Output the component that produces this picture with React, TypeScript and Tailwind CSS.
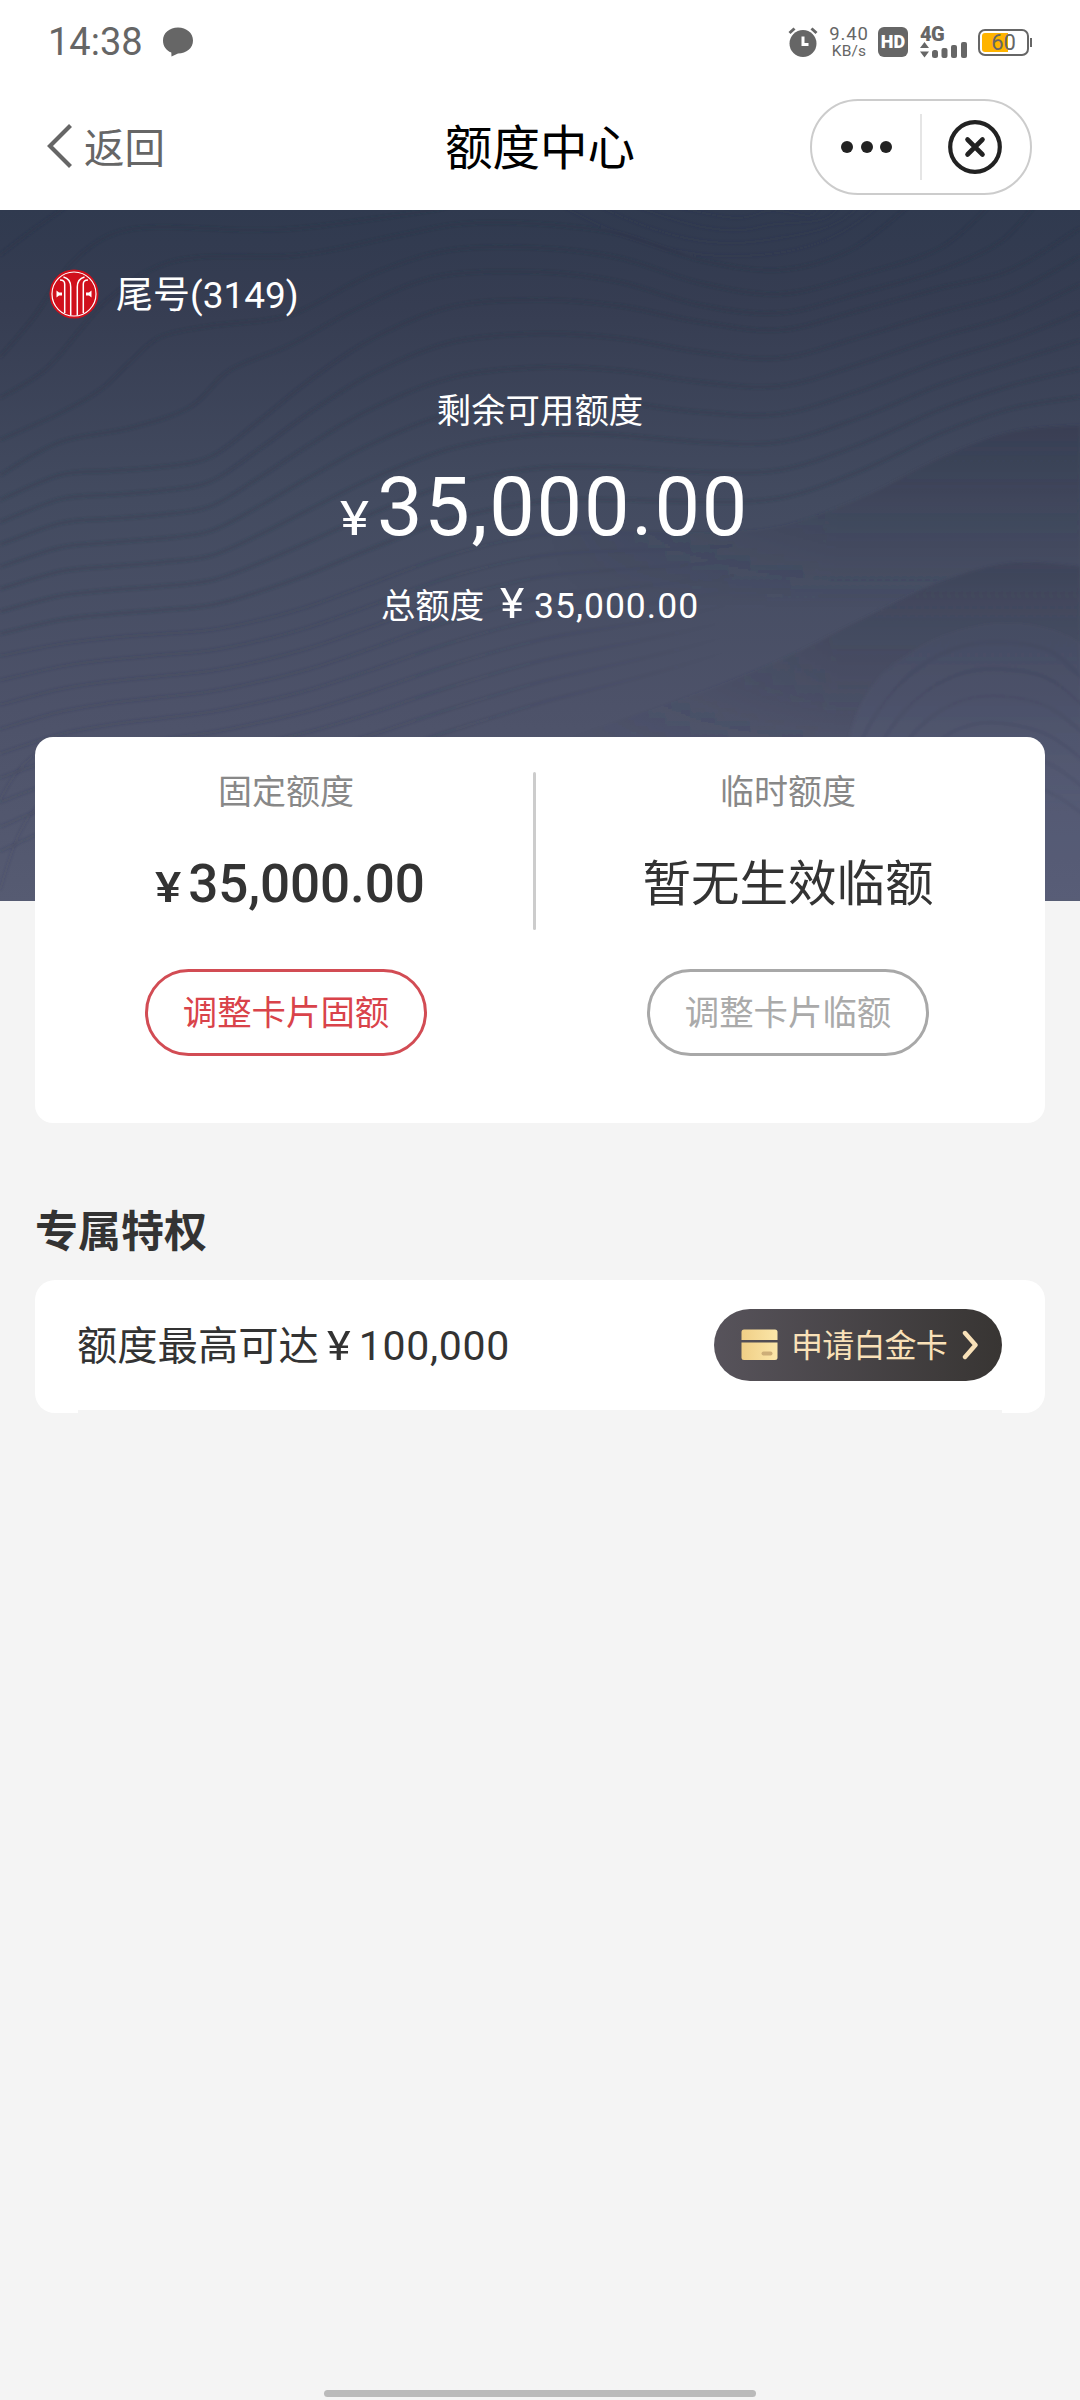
import React from "react";

type Pt = [number, number];

/** Smooth path through a list of points. */
function curve(p: Pt[]): string {
  let d = `M${p[0][0]} ${p[0][1]}`;
  for (let i = 0; i < p.length - 1; i++) {
    const a = p[Math.max(i - 1, 0)];
    const b = p[i];
    const c = p[i + 1];
    const e = p[Math.min(i + 2, p.length - 1)];
    d += ` C${(b[0] + (c[0] - a[0]) / 6).toFixed(1)} ${(b[1] + (c[1] - a[1]) / 6).toFixed(1)} ${(c[0] - (e[0] - b[0]) / 6).toFixed(1)} ${(c[1] - (e[1] - b[1]) / 6).toFixed(1)} ${c[0]} ${c[1]}`;
  }
  return d;
}

const XS = [0, 60, 110, 160, 210, 260, 310, 370, 450, 540, 620, 700, 780, 860, 940, 1010, 1080];
const UPPER = [290, 265, 261, 257, 247, 210, 170, 130, 97, 90, 96, 112, 120, 100, 78, 60, 18];
const RIDGE = [446, 434, 428, 424, 420, 410, 396, 374, 345, 325, 322, 322, 316, 288, 248, 222, 215];
const LOWER = [690, 660, 645, 635, 625, 615, 605, 590, 565, 535, 510, 482, 450, 410, 372, 353, 356];

const mix = (a: number[], b: number[], t: number): Pt[] =>
  XS.map((x, i) => [x, a[i] + (b[i] - a[i]) * t] as Pt);

const TOP_LINES: Pt[][] = [
  [[0, 45], [30, 22], [70, -6]],
  [[0, 147], [34, 107], [70, 55], [110, 25], [160, 17], [250, 20], [310, 17], [420, 2], [460, -6]],
  [[0, 188], [45, 160], [80, 120], [105, 92], [150, 60], [200, 47], [300, 45], [400, 25], [460, 14], [540, 14], [620, 24], [700, 50], [780, 60], [850, 40], [910, -5]],
  [[0, 230], [60, 203], [100, 180], [130, 152], [160, 127], [210, 116], [290, 105], [370, 65], [450, 40], [540, 38], [620, 48], [700, 73], [780, 84], [860, 65], [940, 38], [990, -5]],
  [[0, 265], [60, 232], [130, 218], [190, 197], [230, 160], [290, 135], [360, 97], [440, 66], [540, 62], [620, 72], [700, 95], [780, 103], [860, 83], [940, 60], [1000, 32], [1035, -5]],
];

function HeroBackdrop() {
  return (
    <svg className="absolute inset-0 h-full w-full" viewBox="0 0 1080 691" fill="none" aria-hidden="true">
      <defs>
        <linearGradient id="heroBase" x1="0" y1="0" x2="0" y2="1">
          <stop offset="0" stopColor="#303a4f" />
          <stop offset="0.14" stopColor="#363d52" />
          <stop offset="0.42" stopColor="#434b60" />
          <stop offset="0.72" stopColor="#4d5269" />
          <stop offset="1" stopColor="#565b72" />
        </linearGradient>
        <linearGradient id="ridgeShade" x1="0" y1="215" x2="0" y2="400" gradientUnits="userSpaceOnUse">
          <stop offset="0" stopColor="#2f3549" stopOpacity="0.38" />
          <stop offset="1" stopColor="#2f3549" stopOpacity="0" />
        </linearGradient>
        <linearGradient id="lowerShade" x1="0" y1="350" x2="0" y2="560" gradientUnits="userSpaceOnUse">
          <stop offset="0" stopColor="#33394d" stopOpacity="0.36" />
          <stop offset="0.6" stopColor="#33394d" stopOpacity="0.18" />
          <stop offset="1" stopColor="#33394d" stopOpacity="0" />
        </linearGradient>
        <linearGradient id="fadeIn" x1="540" y1="0" x2="840" y2="0" gradientUnits="userSpaceOnUse">
          <stop offset="0" stopColor="#fff" stopOpacity="0" />
          <stop offset="1" stopColor="#fff" />
        </linearGradient>
        <linearGradient id="fadeOut" x1="380" y1="0" x2="740" y2="0" gradientUnits="userSpaceOnUse">
          <stop offset="0" stopColor="#fff" />
          <stop offset="1" stopColor="#fff" stopOpacity="0" />
        </linearGradient>
        <mask id="rightSide" maskUnits="userSpaceOnUse" x="0" y="0" width="1080" height="691">
          <rect width="1080" height="691" fill="url(#fadeIn)" />
        </mask>
        <mask id="leftSide" maskUnits="userSpaceOnUse" x="0" y="0" width="1080" height="691">
          <rect width="1080" height="691" fill="url(#fadeOut)" />
        </mask>
        <linearGradient id="humpLight" x1="0" y1="410" x2="0" y2="600" gradientUnits="userSpaceOnUse">
          <stop offset="0" stopColor="#5a6180" stopOpacity="0.08" />
          <stop offset="1" stopColor="#5a6180" stopOpacity="0.3" />
        </linearGradient>
        <filter id="soft" x="-5%" y="-5%" width="110%" height="110%">
          <feGaussianBlur stdDeviation="1.6" />
        </filter>
      </defs>
      <rect width="1080" height="691" fill="url(#heroBase)" />
      <g filter="url(#soft)">
        <g mask="url(#rightSide)">
          <path d={`${curve(mix(RIDGE, RIDGE, 0).slice(9))} V560 H540Z`} fill="url(#ridgeShade)" />
          <path d={`${curve(mix(LOWER, LOWER, 0).slice(9))} V691 H540Z`} fill="url(#lowerShade)" />
        </g>
        <path d="M842 691 C830 560 850 480 900 450 C960 405 1040 400 1090 440 V691Z" fill="url(#humpLight)" />
        <g stroke="#262b40" strokeOpacity="0.25" strokeWidth="3">
          {TOP_LINES.map((l, i) => (
            <path key={i} d={curve(l)} />
          ))}
          {[0, 1, 2, 3, 4, 5, 6].map((i) => (
            <path key={i} d={curve(mix(UPPER, RIDGE, i / 7))} />
          ))}
        </g>
        <g stroke="#262b40" strokeOpacity="0.14" strokeWidth="3" mask="url(#leftSide)">
          {[0, 1, 2, 3, 4, 5, 6, 7, 8].map((i) => (
            <path key={i} d={curve(mix(RIDGE, LOWER, i / 10))} />
          ))}
        </g>
        <g stroke="#262b40" strokeOpacity="0.1" strokeWidth="3">
          {[0, 1, 2, 3, 4, 5].map((i) => (
            <path key={i} d={`M${850 + i * 12} ${560 + i * 20} C${880 + i * 8} ${470 + i * 25} ${940 + i * 4} ${430 + i * 26} 1000 ${432 + i * 27} S1060 ${450 + i * 27} 1090 ${475 + i * 27}`} />
          ))}
          {[0, 1, 2, 3].map((i) => (
            <path key={i} d={`M${560 + i * 36} -5 C${640 + i * 24} ${40 - i * 12} ${700 + i * 12} ${50 - i * 12} ${760} ${45 - i * 14} S${850 - i * 12} 20 ${880 - i * 20} -5`} />
          ))}
          <path d="M0 590 C15 560 28 545 60 530" />
          <path d="M0 680 C12 640 20 610 44 590" />
        </g>
      </g>
    </svg>
  );
}

function BankLogo() {
  return (
    <svg className="h-[50px] w-[50px]" viewBox="0 0 50 50" fill="none" aria-hidden="true">
      <circle cx="25" cy="25" r="24.5" fill="#d0101c" />
      <circle cx="25" cy="25" r="22" stroke="#fff" strokeWidth="1.2" />
      <g stroke="#fff" strokeWidth="1.5">
        <path d="M15.700 44V15C15.700 12 13.500 11 11 11" />
        <path d="M21.700 46.500V18C21.700 12.500 18.500 9 14.500 8" />
        <path d="M34.300 44V15C34.300 12 36.500 11 39 11" />
        <path d="M28.300 46.500V18C28.300 12.500 31.500 9 35.500 8" />
      </g>
      <path d="M7.500 21.500L10 23.500H13V26.500H10L7.500 28.500Z M42.500 21.500L40 23.500H37V26.500H40L42.500 28.500Z" fill="#fff" />
    </svg>
  );
}

function StatusBar() {
  return (
    <div className="flex h-[84px] items-center justify-between pl-[48px] pr-[48px] text-[#666]">
      <div className="flex items-center">
        <span className="font-[Roboto] text-[38px] leading-[44px]">14:38</span>
        <svg className="ml-[20px] h-[30px] w-[30px]" viewBox="0 0 30 30" fill="#666">
          <path d="M15 0.500C23.500 0.500 30 6 30 13.500C30 21 23.500 26.500 15 26.500L8.500 29.500L8.300 25.500C3 23.500 0 19 0 13.500C0 6 6.500 0.500 15 0.500Z" />
        </svg>
      </div>
      <div className="flex items-center">
        <svg className="h-[30px] w-[30px]" viewBox="0 0 30 30" fill="none">
          <circle cx="15" cy="16.500" r="13.500" fill="#666" />
          <path d="M1.500 6L6.500 1.500M28.500 6L23.500 1.500" stroke="#666" strokeWidth="3" />
          <path d="M15 9.500V17.500H20.500" stroke="#fff" strokeWidth="3" />
        </svg>
        <div className="ml-[10px] flex w-[42px] flex-col items-center font-[Roboto]">
          <span className="text-[18.500px] leading-[19px] tracking-[0.8px]">9.40</span>
          <span className="text-[15.500px] leading-[15px] tracking-[0.2px]">KB/s</span>
        </div>
        <div className="ml-[8px] flex h-[30px] w-[30px] items-center justify-center rounded-[6px] bg-[#666] font-[Roboto] text-[18px] font-black leading-none text-white">
          HD
        </div>
        <div className="ml-[12px] flex h-[31px] w-[47px] flex-col justify-between">
          <span className="h-[15px] font-[Roboto] text-[20px] font-black leading-[14px] tracking-[-0.600px]">4G</span>
          <svg className="-mt-[3px] h-[17px] w-[47px]" viewBox="0 0 47 17" fill="#666">
            <path d="M0 7L4.500 1L9 7ZM0 10.500H9L4.500 16.500Z" />
            <rect x="12" y="9" width="6" height="8" rx="2.500" />
            <rect x="21.500" y="7" width="6" height="10" rx="2" />
            <rect x="31" y="4" width="6" height="13" rx="2" />
            <rect x="41" y="1" width="6" height="16" rx="2" />
          </svg>
        </div>
        <div className="ml-[11px] flex items-center">
          <div className="flex h-[27px] w-[51px] rounded-[7px] border-[2px] border-[#666] bg-[linear-gradient(to_right,#ffb400_28px,#fff_28px)] bg-clip-content p-[2px]">
            <span className="w-full text-center font-[Roboto] text-[22px] leading-[20px]">60</span>
          </div>
          <div className="ml-[1px] h-[9px] w-[2px] bg-[#666]" />
        </div>
      </div>
    </div>
  );
}

function NavBar() {
  return (
    <div className="grid h-[126px] grid-cols-3 px-[47px] font-['Noto_Sans_CJK_SC',sans-serif]">
      <div className="flex h-[126px] items-center pb-[2px] text-[#666]">
        <svg className="h-[44px] w-[25px]" viewBox="0 0 25 44" fill="none">
          <path d="M23.500 1.500L3 22L23.500 42.500" stroke="#666" strokeWidth="4.200" />
        </svg>
        <span className="ml-[12px] text-[40.500px] leading-[60px]">返回</span>
      </div>
      <h1 className="self-center pb-[5px] text-center text-[47.500px] leading-[70px] text-black">额度中心</h1>
      <div className="mb-[1px] mr-px flex h-[96px] w-[222px] items-center self-center justify-self-end rounded-full border-2 border-[#ccc]">
        <svg className="ml-[28px] h-[14px] w-[52px]" viewBox="0 0 52 14" fill="#222">
          <circle cx="7" cy="7" r="6" />
          <circle cx="27" cy="7" r="6" />
          <circle cx="46" cy="7" r="6" />
        </svg>
        <div className="ml-[28px] h-[66px] w-[2px] bg-[#e5e5e5]" />
        <svg className="ml-[26px] h-[54px] w-[54px]" viewBox="0 0 54 54" fill="none" stroke="#222">
          <circle cx="27" cy="27" r="24.800" strokeWidth="4.200" />
          <path d="M19.500 19.500L34.500 34.500M34.500 19.500L19.500 34.500" strokeWidth="4.600" strokeLinecap="round" />
        </svg>
      </div>
    </div>
  );
}

function Hero() {
  return (
    <section className="relative h-[691px] overflow-hidden text-white">
      <HeroBackdrop />
      <div className="relative flex flex-col font-['Noto_Sans_CJK_SC',sans-serif]">
        <div className="mt-[59px] flex h-[50px] items-center pl-[49px]">
          <BankLogo />
          <div className="ml-[17px] flex items-baseline whitespace-nowrap">
            <span className="text-[37px] leading-[50px]">尾号</span>
            <span className="font-[Roboto] text-[37px] leading-[50px]">(3149)</span>
          </div>
        </div>
        <div className="mt-[64px] h-[50px] text-center text-[34.4px] leading-[50px]">剩余可用额度</div>
        <div className="mt-[28px] flex h-[93px] items-baseline justify-center pl-[9px] font-[Roboto] leading-[94px]">
          <span className="w-[37px] origin-left scale-x-115 text-[48px]">¥</span>
          <span className="text-[81px] tracking-[1.800px]">35,000.00</span>
        </div>
        <div className="mt-[24px] flex h-[50px] items-baseline justify-center leading-[50px]">
          <span className="text-[34.4px]">总额度</span>
          <span className="ml-[16px] w-[34px] origin-left scale-x-110 font-[Roboto] text-[42px]">¥</span>
          <span className="font-[Roboto] text-[35.500px] tracking-[1px]">35,000.00</span>
        </div>
      </div>
    </section>
  );
}

function LimitCard() {
  return (
    <section className="relative mx-[35px] -mt-[164px] flex h-[386px] rounded-[18px] bg-white font-['Noto_Sans_CJK_SC',sans-serif]">
      <div className="flex w-[498px] flex-col items-center pl-[4px]">
        <div className="mt-[28px] h-[50px] text-[34px] leading-[50px] text-[#888]">固定额度</div>
        <div className="mt-[34px] flex h-[68px] items-baseline whitespace-nowrap pl-[8px] font-[Roboto] font-medium leading-[70px] text-[#333]">
          <span className="w-[33px] origin-left scale-x-115 text-[43px]">¥</span>
          <span className="text-[53px] tracking-[-0.100px]">35,000.00</span>
        </div>
        <button className="mt-[52px] flex h-[87px] w-[282px] justify-center rounded-full border-[3px] border-[#d24c54] text-[34.4px] leading-[76px] text-[#d9434a]">
          调整卡片固额
        </button>
      </div>
      <div className="mt-[35px] h-[158px] w-[3px] rounded-full bg-[#ccc]" />
      <div className="flex flex-1 flex-col items-center pr-[5px]">
        <div className="mt-[28px] h-[50px] text-[34px] leading-[50px] text-[#888]">临时额度</div>
        <div className="mt-[30px] h-[72px] text-[48.500px] leading-[70px] text-[#333]">暂无生效临额</div>
        <button className="mt-[52px] flex h-[87px] w-[282px] justify-center rounded-full border-[3px] border-[#a8a8a8] text-[34.4px] leading-[76px] text-[#aaa]">
          调整卡片临额
        </button>
      </div>
    </section>
  );
}

function Privileges() {
  return (
    <section className="mx-[35px] mt-[73px] font-['Noto_Sans_CJK_SC',sans-serif]">
      <h2 className="h-[64px] text-[43px] font-bold leading-[64px] text-[#333]">专属特权</h2>
      <div className="mt-[20px] flex h-[133px] flex-col rounded-[20px] bg-white">
        <div className="flex h-[130px] items-center justify-between pl-[42px] pr-[43px]">
          <div className="flex items-baseline text-[#333]">
            <span className="text-[40.300px] leading-[60px]">额度最高可达</span>
            <span className="ml-[8px] w-[32px] origin-left scale-x-110 font-[Roboto] text-[41px]">¥</span>
            <span className="font-[Roboto] text-[41px] tracking-[0.700px]">100,000</span>
          </div>
          <button className="flex h-[72px] w-[288px] items-center rounded-full bg-linear-to-r from-[#57535b] to-[#383533] pl-[27px] text-[#f9e1b8]">
            <svg className="h-[32px] w-[37px]" viewBox="0 0 37 32" fill="none">
              <defs>
                <linearGradient id="cardGold" x1="0" y1="0" x2="1" y2="0">
                  <stop offset="0" stopColor="#f0cf86" />
                  <stop offset="1" stopColor="#fbe6a9" />
                </linearGradient>
              </defs>
              <path d="M3 0.500H34Q36.500 0.500 36.500 3V11H0.500V3Q0.500 0.500 3 0.500Z" fill="url(#cardGold)" />
              <path d="M0.500 13.500H36.500V28.500Q36.500 31 34 31H3Q0.500 31 0.500 28.500Z" fill="url(#cardGold)" />
              <rect x="20.500" y="22.500" width="11" height="4" rx="2" fill="#cdae78" />
            </svg>
            <span className="ml-[13px] pb-[4px] text-[32px] leading-[48px] tracking-[-0.800px]">申请白金卡</span>
            <svg className="ml-[15px] h-[30px] w-[18px]" viewBox="0 0 18 30" fill="none">
              <path d="M3 3L13.500 15L3 27" stroke="#f9e1b8" strokeWidth="4.400" strokeLinecap="round" strokeLinejoin="round" />
            </svg>
          </button>
        </div>
        <div className="mx-[43px] h-[3px] bg-[#f4f4f4]" />
      </div>
    </section>
  );
}

export default function App() {
  return (
    <div className="flex h-[2400px] w-[1080px] flex-col bg-[#f4f4f4]">
      <header className="h-[210px] bg-white">
        <StatusBar />
        <NavBar />
      </header>
      <Hero />
      <LimitCard />
      <Privileges />
      <div className="mb-[3px] mt-auto h-[7px] w-[432px] self-center rounded-full bg-[#bababa]" />
    </div>
  );
}
